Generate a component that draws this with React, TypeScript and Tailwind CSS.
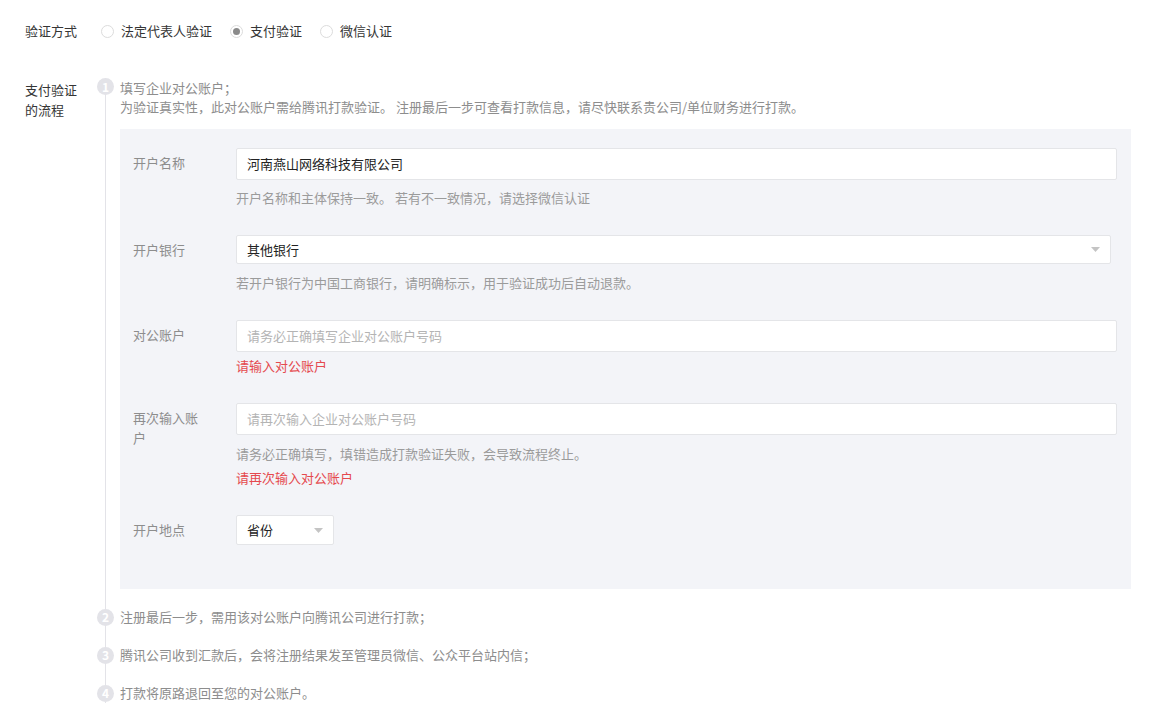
const font = { fontFamily: '"Noto Sans CJK SC", "Liberation Sans", sans-serif' };

function Radio({ label, checked }: { label: string; checked?: boolean }) {
  return (
    <label className="flex items-center mr-[18px]">
      <span className="w-[13px] h-[13px] rounded-full border border-[#dcdcdc] bg-white flex items-center justify-center mr-[7px]">
        {checked && <span className="w-[7px] h-[7px] rounded-full bg-[#8a8a8a]" />}
      </span>
      <span className="text-[13px] leading-[20px] text-[#353535]">{label}</span>
    </label>
  );
}

function Arrow() {
  return (
    <svg width="9" height="5" viewBox="0 0 9 5" className="shrink-0">
      <path d="M0 0 L9 0 L4.5 5 Z" fill="#c4c4c4" />
    </svg>
  );
}

function FieldRow({
  label,
  children,
}: {
  label: string;
  children: React.ReactNode;
}) {
  return (
    <div className="flex">
      <div className="w-[103px] shrink-0 pr-[30px] pt-[5px] text-[13px] leading-[20px] text-[#8d8d8d]">
        {label}
      </div>
      <div className="flex-1 flex flex-col">{children}</div>
    </div>
  );
}

function Input({ value, placeholder }: { value?: string; placeholder?: string }) {
  return (
    <div className="h-[32px] bg-white border border-[#e4e5e8] rounded-[2px] px-[10px] flex items-center text-[13px]">
      {value ? (
        <span className="text-[#222]">{value}</span>
      ) : (
        <span className="text-[#b4b4b4]">{placeholder}</span>
      )}
    </div>
  );
}

function Hint({ text, mt = "mt-[8px]" }: { text: string; mt?: string }) {
  return <div className={`${mt} text-[13px] leading-[20px] text-[#9b9b9b]`}>{text}</div>;
}

function Err({ text }: { text: string }) {
  return <div className="mt-[4px] text-[13px] leading-[20px] text-[#e5494e]">{text}</div>;
}

function StepDot({ n }: { n: number }) {
  return (
    <span className="relative z-10 w-[17px] h-[17px] rounded-full bg-[#e3e3e8] text-white text-[12px] font-bold leading-none flex items-center justify-center shrink-0">
      {n}
    </span>
  );
}

export default function App() {
  return (
    <div className="w-[1158px] h-[716px] bg-white overflow-hidden pl-[25px]" style={font}>
      <div className="flex items-center pt-[21px]">
        <div className="w-[72px] shrink-0 text-[13px] leading-[20px] text-[#353535]">验证方式</div>
        <div className="flex items-center ml-[4px]">
          <Radio label="法定代表人验证" />
          <Radio label="支付验证" checked />
          <Radio label="微信认证" />
        </div>
      </div>

      <div className="flex mt-[38px]">
        <div className="w-[72px] shrink-0 pr-[14px] pt-[1px] text-[13px] leading-[20px] text-[#353535]">
          支付验证的流程
        </div>
        <div className="relative flex-1">
          <div className="absolute left-[8px] top-[8px] bottom-0 w-px bg-[#e3e3e8]" />

          <div className="flex items-start">
            <div className="w-[23px] shrink-0 -mt-[1px]">
              <StepDot n={1} />
            </div>
            <div className="flex-1 pr-[27px]">
              <div className="text-[13px] leading-[19px] text-[#8d8d8d] -mt-[1px]">
                <div>填写企业对公账户；</div>
                <div>为验证真实性，此对公账户需给腾讯打款验证。 注册最后一步可查看打款信息，请尽快联系贵公司/单位财务进行打款。</div>
              </div>
              <div className="mt-[13px] bg-[#f3f4f8] pl-[13px] pr-[14px] pt-[19px] pb-[44px] flex flex-col gap-[27px]">
                <FieldRow label="开户名称">
                  <Input value="河南燕山网络科技有限公司" />
                  <Hint text="开户名称和主体保持一致。 若有不一致情况，请选择微信认证" />
                </FieldRow>
                <FieldRow label="开户银行">
                  <div className="w-[875px] h-[29px] bg-white border border-[#e4e5e8] rounded-[2px] pl-[10px] pr-[10px] flex items-center justify-between text-[13px] text-[#222]">
                    <span>其他银行</span>
                    <Arrow />
                  </div>
                  <Hint text="若开户银行为中国工商银行，请明确标示，用于验证成功后自动退款。" mt="mt-[9px]" />
                </FieldRow>
                <FieldRow label="对公账户">
                  <Input placeholder="请务必正确填写企业对公账户号码" />
                  <Err text="请输入对公账户" />
                </FieldRow>
                <FieldRow label="再次输入账户">
                  <Input placeholder="请再次输入企业对公账户号码" />
                  <Hint text="请务必正确填写，填错造成打款验证失败，会导致流程终止。" mt="mt-[9px]" />
                  <Err text="请再次输入对公账户" />
                </FieldRow>
                <FieldRow label="开户地点">
                  <div className="w-[98px] h-[30px] bg-white border border-[#e4e5e8] rounded-[2px] pl-[10px] pr-[10px] flex items-center justify-between text-[13px] text-[#222]">
                    <span>省份</span>
                    <Arrow />
                  </div>
                </FieldRow>
              </div>
            </div>
          </div>

          <div className="flex items-center mt-[18px]">
            <div className="w-[23px] shrink-0">
              <StepDot n={2} />
            </div>
            <span className="text-[13px] leading-[20px] text-[#8d8d8d]">注册最后一步，需用该对公账户向腾讯公司进行打款；</span>
          </div>
          <div className="flex items-center mt-[18px]">
            <div className="w-[23px] shrink-0">
              <StepDot n={3} />
            </div>
            <span className="text-[13px] leading-[20px] text-[#8d8d8d]">腾讯公司收到汇款后，会将注册结果发至管理员微信、公众平台站内信；</span>
          </div>
          <div className="flex items-center mt-[18px]">
            <div className="w-[23px] shrink-0">
              <StepDot n={4} />
            </div>
            <span className="text-[13px] leading-[20px] text-[#8d8d8d]">打款将原路退回至您的对公账户。</span>
          </div>
        </div>
      </div>
    </div>
  );
}
